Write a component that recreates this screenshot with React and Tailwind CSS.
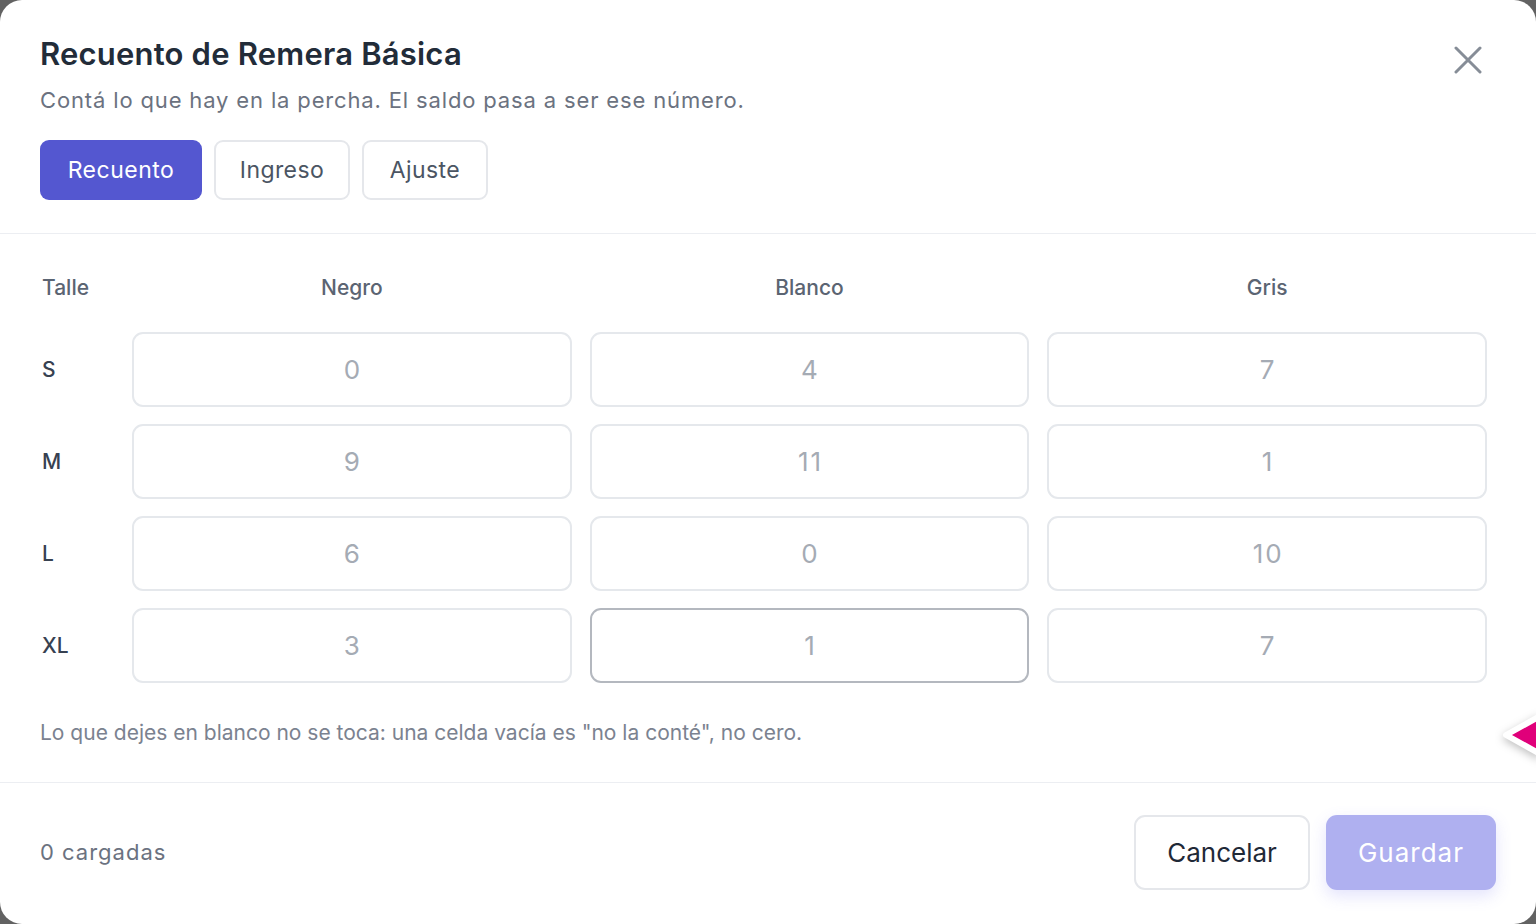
import React from "react";

const rows = [
  { size: "S", vals: ["0", "4", "7"] },
  { size: "M", vals: ["9", "11", "1"] },
  { size: "L", vals: ["6", "0", "10"] },
  { size: "XL", vals: ["3", "1", "7"] },
];

export default function App() {
  return (
    <div
      className="w-[1536px] h-[924px] bg-[#626262] relative overflow-hidden"
      style={{ fontFamily: "Inter, 'Noto Sans', sans-serif" }}
    >
      <div className="w-full h-full bg-white rounded-[22px] flex flex-col">
        {/* Header */}
        <div className="relative px-[40px] pt-[36px] pb-[33px] border-b border-[#eceef2]">
          <h1 className="text-[31px] leading-[36px] font-semibold text-[#222c39] tracking-[0.2px]">Recuento de Remera Básica</h1>
          <p className="mt-[14px] text-[22px] leading-[28px] text-[#6b7280] tracking-[0.85px]">Contá lo que hay en la percha. El saldo pasa a ser ese número.</p>
          <div className="mt-[26px] flex gap-[12px]">
            <button className="h-[60px] w-[162px] rounded-[9px] bg-[#5457d0] text-white text-[23px] tracking-[0.5px]">Recuento</button>
            <button className="h-[60px] w-[136px] rounded-[9px] border-2 border-[#e5e7eb] bg-white text-[#4b5563] text-[23px] tracking-[0.4px]">Ingreso</button>
            <button className="h-[60px] w-[126px] rounded-[9px] border-2 border-[#e5e7eb] bg-white text-[#4b5563] text-[23px] tracking-[0.4px]">Ajuste</button>
          </div>
          <button className="absolute right-[54px] top-[46px] text-[#868d97]">
            <svg width="28" height="28" viewBox="0 0 28 28" fill="none" stroke="currentColor" strokeWidth="3" strokeLinecap="round">
              <path d="M2 2L26 26M26 2L2 26" />
            </svg>
          </button>
        </div>

        {/* Body */}
        <div className="pl-[40px] pr-[49px] pt-[40px] pb-[35px] border-b border-[#eceef2]">
          <div className="grid grid-cols-[74px_1fr_1fr_1fr] gap-x-[18px] gap-y-[17px] items-center">
            <div className="h-[28px] mb-[13px] pl-[2px] flex items-center text-[21px] font-medium text-[#5b6472]">Talle</div>
            <div className="h-[28px] mb-[13px] flex items-center justify-center text-[21px] font-medium text-[#5b6472]">Negro</div>
            <div className="h-[28px] mb-[13px] flex items-center justify-center text-[21px] font-medium text-[#5b6472]">Blanco</div>
            <div className="h-[28px] mb-[13px] flex items-center justify-center text-[21px] font-medium text-[#5b6472]">Gris</div>
            {rows.map((r) => (
              <React.Fragment key={r.size}>
                <div className="pl-[2px] text-[21px] text-[#374151] font-medium">{r.size}</div>
                {r.vals.map((v, i) => {
                  const focused = r.size === "XL" && i === 1;
                  return (
                    <div
                      key={i}
                      className={
                        "h-[75px] rounded-[11px] border-2 flex items-center justify-center text-[26px] text-[#a5abb4] " +
                        (focused ? "border-[#b4b8bf]" : "border-[#e5e8ec]")
                      }
                    >
                      <span className="tracking-[2px] pl-[2px]">{v}</span>
                    </div>
                  );
                })}
              </React.Fragment>
            ))}
          </div>
          <p className="mt-[36px] text-[21px] leading-[28px] text-[#7b8290]">Lo que dejes en blanco no se toca: una celda vacía es "no la conté", no cero.</p>
        </div>

        {/* Footer */}
        <div className="flex-1 flex items-center justify-between pl-[40px] pr-[40px] pb-[2px]">
          <span className="text-[22px] text-[#6b7280] tracking-[1px]">0 cargadas</span>
          <div className="flex gap-[16px]">
            <button className="h-[75px] w-[176px] rounded-[11px] border-2 border-[#e5e7eb] bg-white text-[26px] text-[#1f2937]">Cancelar</button>
            <button className="h-[75px] w-[170px] rounded-[11px] bg-[#afb0f0] text-[26px] text-white tracking-[1px] shadow-[0_6px_16px_rgba(99,102,241,0.18)]">Guardar</button>
          </div>
        </div>
      </div>

      {/* Pink pointer */}
      <svg className="absolute left-[1500px] top-[708px]" width="40" height="56" viewBox="0 0 40 56" style={{ filter: "drop-shadow(0 3px 4px rgba(0,0,0,0.25))" }}>
        <path d="M6 27 L40 8 L40 46 Z" fill="#e0007a" stroke="white" strokeWidth="6" strokeLinejoin="round" />
      </svg>
    </div>
  );
}
